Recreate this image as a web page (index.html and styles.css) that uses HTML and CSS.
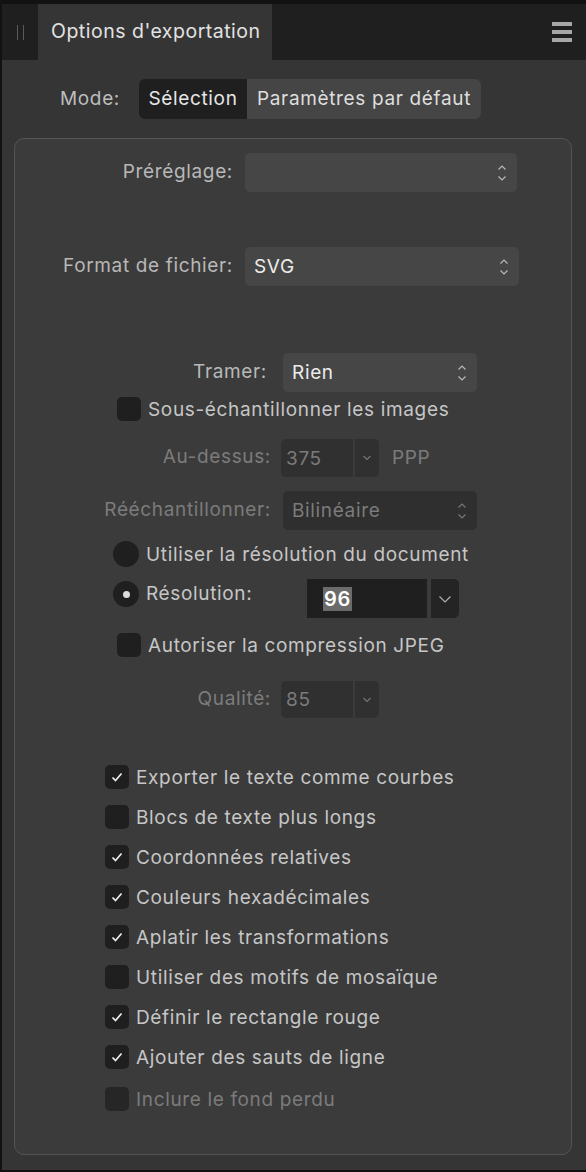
FILE: index.html
```html
<!DOCTYPE html>
<html lang="fr">
<head>
<meta charset="utf-8">
<title>Options d'exportation</title>
<link rel="stylesheet" href="styles.css">
</head>
<body>
<div class="panel">
  <div class="header">
    <div class="handle"><span></span><span></span></div>
    <div class="tab">Options d'exportation</div>
    <div class="spacer"></div>
    <div class="menu"><span></span><span></span><span></span></div>
  </div>
  <div class="body">
    <div class="mode-row">
      <span class="mode-label">Mode:</span>
      <div class="segmented">
        <div class="seg seg-on">Sélection</div>
        <div class="seg seg-off">Paramètres par défaut</div>
      </div>
    </div>

    <div class="group">
      <div class="row r-preset">
        <span class="lbl lbl-a">Préréglage:</span>
        <div class="select sel-wide"><span class="val"></span>
          <svg class="updown" width="10" height="20" viewBox="0 0 10 20"><path d="M1.5 6.5 L5 3 L8.5 6.5 M1.5 13.5 L5 17 L8.5 13.5" fill="none" stroke="#b8b8b8" stroke-width="1.2"/></svg>
        </div>
      </div>

      <div class="row r-format">
        <span class="lbl lbl-a">Format de fichier:</span>
        <div class="select sel-wide2"><span class="val">SVG</span>
          <svg class="updown" width="10" height="20" viewBox="0 0 10 20"><path d="M1.5 6.5 L5 3 L8.5 6.5 M1.5 13.5 L5 17 L8.5 13.5" fill="none" stroke="#b8b8b8" stroke-width="1.2"/></svg>
        </div>
      </div>

      <div class="row r-tramer">
        <span class="lbl lbl-b">Tramer:</span>
        <div class="select sel-mid"><span class="val">Rien</span>
          <svg class="updown" width="10" height="20" viewBox="0 0 10 20"><path d="M1.5 6.5 L5 3 L8.5 6.5 M1.5 13.5 L5 17 L8.5 13.5" fill="none" stroke="#b8b8b8" stroke-width="1.2"/></svg>
        </div>
      </div>

      <div class="row check-row r-sous">
        <span class="cb"></span>
        <span class="ctext">Sous-échantillonner les images</span>
      </div>

      <div class="row r-above">
        <span class="lbl lbl-c dis">Au-dessus:</span>
        <div class="num dis-field"><span class="val dis">375</span></div>
        <div class="dd dis-field"><svg width="10" height="8" viewBox="0 0 10 8"><path d="M1.5 2 L5 5.5 L8.5 2" fill="none" stroke="#777" stroke-width="1.1"/></svg></div>
        <span class="unit dis">PPP</span>
      </div>

      <div class="row r-resample">
        <span class="lbl lbl-c lbl-c2 dis">Rééchantillonner:</span>
        <div class="select sel-mid sel-dis"><span class="val dis">Bilinéaire</span>
          <svg class="updown" width="10" height="20" viewBox="0 0 10 20"><path d="M1.5 6.5 L5 3 L8.5 6.5 M1.5 13.5 L5 17 L8.5 13.5" fill="none" stroke="#777" stroke-width="1.2"/></svg>
        </div>
      </div>

      <div class="row radio-row r-rad1">
        <span class="radio"></span>
        <span class="ctext">Utiliser la résolution du document</span>
      </div>

      <div class="row radio-row r-rad2">
        <span class="radio radio-on"></span>
        <span class="ctext res-label">Résolution:</span>
        <div class="num num-res"><span class="sel-text">96</span></div>
        <div class="dd dd-res"><svg width="14" height="10" viewBox="0 0 14 10"><path d="M1.5 2.5 L7 8 L12.5 2.5" fill="none" stroke="#b0b0b0" stroke-width="1.2"/></svg></div>
      </div>

      <div class="row check-row r-jpeg">
        <span class="cb"></span>
        <span class="ctext">Autoriser la compression JPEG</span>
      </div>

      <div class="row r-quality">
        <span class="lbl lbl-c dis">Qualité:</span>
        <div class="num dis-field"><span class="val dis">85</span></div>
        <div class="dd dis-field"><svg width="10" height="8" viewBox="0 0 10 8"><path d="M1.5 2 L5 5.5 L8.5 2" fill="none" stroke="#777" stroke-width="1.1"/></svg></div>
      </div>

      <div class="list">
        <div class="li"><span class="cb on"><svg width="14" height="12" viewBox="0 0 14 12"><path d="M2.5 6.5 L5.5 9.5 L11.5 2.5" fill="none" stroke="#ededed" stroke-width="1.7"/></svg></span><span class="ctext">Exporter le texte comme courbes</span></div>
        <div class="li"><span class="cb"></span><span class="ctext">Blocs de texte plus longs</span></div>
        <div class="li"><span class="cb on"><svg width="14" height="12" viewBox="0 0 14 12"><path d="M2.5 6.5 L5.5 9.5 L11.5 2.5" fill="none" stroke="#ededed" stroke-width="1.7"/></svg></span><span class="ctext">Coordonnées relatives</span></div>
        <div class="li"><span class="cb on"><svg width="14" height="12" viewBox="0 0 14 12"><path d="M2.5 6.5 L5.5 9.5 L11.5 2.5" fill="none" stroke="#ededed" stroke-width="1.7"/></svg></span><span class="ctext">Couleurs hexadécimales</span></div>
        <div class="li"><span class="cb on"><svg width="14" height="12" viewBox="0 0 14 12"><path d="M2.5 6.5 L5.5 9.5 L11.5 2.5" fill="none" stroke="#ededed" stroke-width="1.7"/></svg></span><span class="ctext">Aplatir les transformations</span></div>
        <div class="li"><span class="cb"></span><span class="ctext">Utiliser des motifs de mosaïque</span></div>
        <div class="li"><span class="cb on"><svg width="14" height="12" viewBox="0 0 14 12"><path d="M2.5 6.5 L5.5 9.5 L11.5 2.5" fill="none" stroke="#ededed" stroke-width="1.7"/></svg></span><span class="ctext">Définir le rectangle rouge</span></div>
        <div class="li"><span class="cb on"><svg width="14" height="12" viewBox="0 0 14 12"><path d="M2.5 6.5 L5.5 9.5 L11.5 2.5" fill="none" stroke="#ededed" stroke-width="1.7"/></svg></span><span class="ctext">Ajouter des sauts de ligne</span></div>
        <div class="li li-last"><span class="cb cb-dis"></span><span class="ctext dis">Inclure le fond perdu</span></div>
      </div>
    </div>
  </div>
</div>
</body>
</html>
```

FILE: styles.css
```css
* { box-sizing: border-box; }
html, body { margin: 0; padding: 0; }
body {
  width: 586px;
  height: 1172px;
  background: #121212;
  font-family: Inter, "Noto Sans", "Liberation Sans", sans-serif;
  font-size: 19px;
  letter-spacing: 0.65px;
  overflow: hidden;
}
.panel {
  margin-left: 2px;
  padding-top: 4px;
  height: 1170px;
  display: flex;
  flex-direction: column;
}
.header {
  height: 56px;
  background: #1f1f1f;
  display: flex;
  align-items: stretch;
}
.handle {
  width: 36px;
  display: flex;
  justify-content: center;
  align-items: center;
  gap: 5px;
}
.handle span {
  width: 1px;
  height: 15px;
  background: #5a5a5a;
}
.tab {
  width: 234px;
  background: #353535;
  color: #e2e2e2;
  font-size: 19.5px;
  letter-spacing: 0.5px;
  padding-left: 13px;
  display: flex;
  align-items: center;
  padding-bottom: 2px;
  white-space: nowrap;
}
.spacer { flex: 1; }
.menu {
  width: 36px;
  margin-right: 14px;
  display: flex;
  flex-direction: column;
  justify-content: center;
  align-items: flex-end;
  gap: 4px;
}
.menu span {
  width: 20px;
  height: 4px;
  background: #a6a6a6;
}
.body {
  flex: 1;
  background: #353535;
  padding-top: 19px;
}
.mode-row {
  display: flex;
  align-items: center;
  height: 40px;
  padding-left: 58px;
}
.mode-label {
  color: #bdbdbd;
  width: 79px;
  padding-bottom: 2px;
}
.segmented {
  display: flex;
  height: 40px;
  border-radius: 6px;
  overflow: hidden;
}
.seg {
  display: flex;
  align-items: center;
  justify-content: center;
  padding-bottom: 2px;
  white-space: nowrap;
}
.seg-on { width: 108px; background: #1f1f1f; color: #e6e6e6; }
.seg-off { width: 234px; background: #454545; color: #dedede; }

.group {
  margin: 19px 14px 0 12px;
  height: 1017px;
  background: #3b3b3b;
  border: 1px solid #545454;
  border-radius: 10px;
  padding-top: 14px;
}
.row {
  display: flex;
  align-items: center;
}
.lbl {
  text-align: right;
  color: #b8b8b8;
  padding-bottom: 3px;
  flex: none;
  white-space: nowrap;
}
.lbl-a { width: 218px; margin-right: 12px; }
.lbl-b { width: 252px; margin-right: 16px; }
.lbl-c { width: 256px; margin-right: 10px; }
.lbl-c2 { margin-right: 12px; }
.dis { color: #7b7b7b !important; }

.select {
  height: 39px;
  background: #464646;
  border-radius: 5px;
  display: flex;
  align-items: center;
  justify-content: space-between;
  padding: 0 10px 0 9px;
}
.sel-wide { width: 272px; }
.sel-wide2 { width: 274px; }
.sel-mid { width: 194px; }
.sel-dis { background: #2f2f2f; }
.val {
  color: #ececec;
  padding-bottom: 0;
}
.updown { flex: none; }

.r-preset { height: 39px; }
.r-format { height: 39px; margin-top: 55px; }
.r-tramer { height: 39px; margin-top: 67px; }
.r-sous { margin-top: 5px; }
.r-above { height: 38px; margin-top: 18px; }
.r-resample { height: 39px; margin-top: 14px; }
.r-rad1 { margin-top: 11px; }
.r-rad2 { height: 39px; margin-top: 12px; align-items: flex-start; }
.r-jpeg { margin-top: 15px; }
.r-quality { height: 37px; margin-top: 24px; }

.check-row { height: 24px; padding-left: 102px; }
.radio-row { padding-left: 98px; }
.r-rad1 { height: 26px; }

.cb {
  width: 24px;
  height: 24px;
  border-radius: 5px;
  background: #1f1f1f;
  flex: none;
  display: flex;
  align-items: center;
  justify-content: center;
}
.cb-dis { background: #262626; }
.ctext {
  margin-left: 7px;
  color: #c6c6c6;
  padding-top: 1px;
  white-space: nowrap;
}
.radio {
  width: 26px;
  height: 26px;
  border-radius: 50%;
  background: #1f1f1f;
  flex: none;
  display: flex;
  align-items: center;
  justify-content: center;
}
.radio-on::after {
  content: "";
  width: 7px;
  height: 7px;
  border-radius: 50%;
  background: #dcdcdc;
}
.r-rad2 .radio { margin-top: 2px; }
.res-label {
  width: 161px;
  flex: none;
  line-height: 26px;
  margin-top: 2px;
  padding-top: 0;
}

.num {
  height: 100%;
  width: 72px;
  border-radius: 5px 0 0 5px;
  display: flex;
  align-items: center;
  padding-left: 5px;
}
.dd {
  height: 100%;
  width: 24px;
  margin-left: 2px;
  border-radius: 0 5px 5px 0;
  display: flex;
  align-items: center;
  justify-content: center;
}
.dis-field { background: #303030; }
.unit {
  margin-left: 13px;
  padding-bottom: 2px;
}
.num-res {
  width: 120px;
  height: 39px;
  background: #1f1f1f;
  border-radius: 0;
  padding-left: 16px;
}
.dd-res {
  width: 28px;
  height: 39px;
  margin-left: 4px;
  background: #242424;
}
.sel-text {
  background: #6b6b6b;
  color: #ffffff;
  font-size: 20px;
  font-weight: 600;
  line-height: 24px;
  padding: 0 1px;
}

.list {
  margin-top: 47px;
  padding-left: 90px;
  display: flex;
  flex-direction: column;
  gap: 16px;
}
.li {
  display: flex;
  align-items: center;
  height: 24px;
}
.li-last { margin-top: 2px; }
```
